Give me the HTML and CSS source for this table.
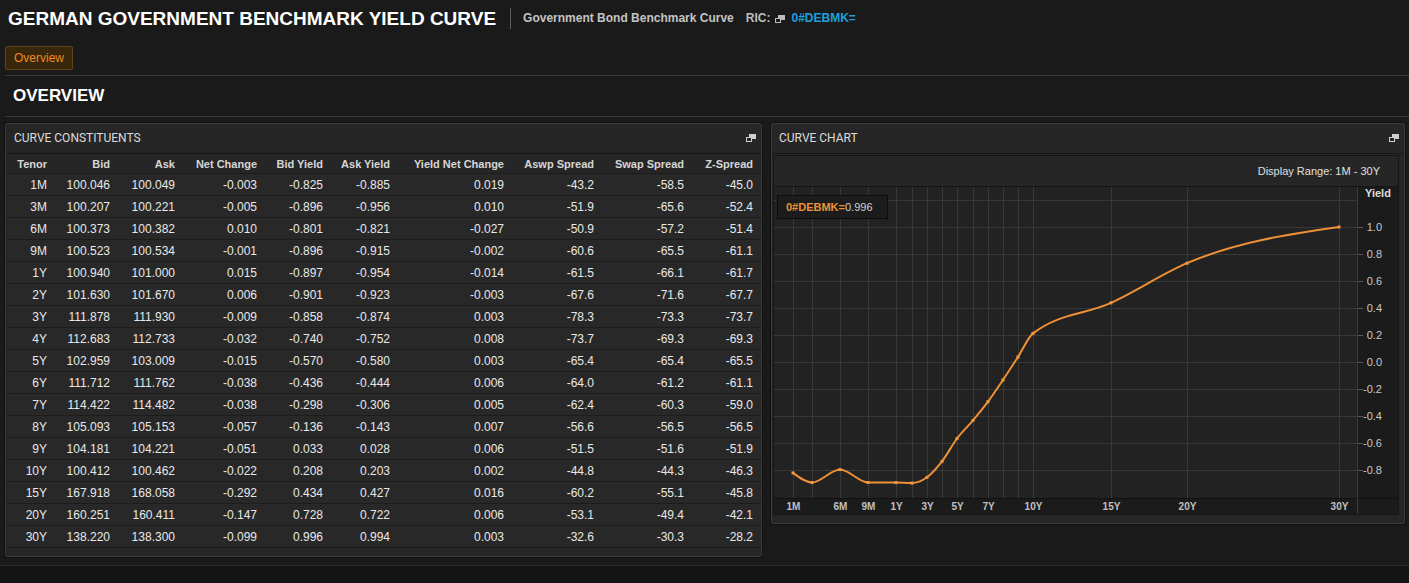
FILE: index.html
```html
<!DOCTYPE html>
<html lang="en">
<head>
<meta charset="utf-8">
<title>German Government Benchmark Yield Curve</title>
<link rel="stylesheet" href="styles.css">
</head>
<body>
<header class="topbar">
  <h1 class="title">GERMAN GOVERNMENT BENCHMARK YIELD CURVE</h1>
  <span class="divider"></span>
  <span class="subtitle">Government Bond Benchmark Curve</span>
  <span class="ric-label">RIC:</span>
  <svg class="ric-icon" viewBox="0 0 10 8"><rect x="3.5" y="0.5" width="6" height="4" fill="#bdbdbd" stroke="#bdbdbd"/><rect x="0.5" y="3.5" width="5" height="4" fill="#1a1a1a" stroke="#bdbdbd"/></svg>
  <span class="ric">0#DEBMK=</span>
</header>
<nav class="tabs"><button class="tab">Overview</button></nav>
<h2 class="section-title">OVERVIEW</h2>
<main class="panels">
  <section class="panel constituents">
    <div class="panel-head"><span>CURVE CONSTITUENTS</span><svg class="restore" viewBox="0 0 10 8"><rect x="3.5" y="0.5" width="6" height="4" fill="#cfcfcf" stroke="#cfcfcf"/><rect x="0.5" y="3.5" width="5" height="4" fill="#262626" stroke="#cfcfcf"/></svg></div>
    <table class="grid">
      <colgroup><col class="c1"><col class="c2"><col class="c3"><col class="c4"><col class="c5"><col class="c6"><col class="c7"><col class="c8"><col class="c9"><col class="c10"></colgroup>
      <thead><tr><th>Tenor</th><th>Bid</th><th>Ask</th><th>Net Change</th><th>Bid Yield</th><th>Ask Yield</th><th>Yield Net Change</th><th>Aswp Spread</th><th>Swap Spread</th><th>Z-Spread</th></tr></thead>
      <tbody>
        <tr><td>1M</td><td>100.046</td><td>100.049</td><td>-0.003</td><td>-0.825</td><td>-0.885</td><td>0.019</td><td>-43.2</td><td>-58.5</td><td>-45.0</td></tr>
        <tr><td>3M</td><td>100.207</td><td>100.221</td><td>-0.005</td><td>-0.896</td><td>-0.956</td><td>0.010</td><td>-51.9</td><td>-65.6</td><td>-52.4</td></tr>
        <tr><td>6M</td><td>100.373</td><td>100.382</td><td>0.010</td><td>-0.801</td><td>-0.821</td><td>-0.027</td><td>-50.9</td><td>-57.2</td><td>-51.4</td></tr>
        <tr><td>9M</td><td>100.523</td><td>100.534</td><td>-0.001</td><td>-0.896</td><td>-0.915</td><td>-0.002</td><td>-60.6</td><td>-65.5</td><td>-61.1</td></tr>
        <tr><td>1Y</td><td>100.940</td><td>101.000</td><td>0.015</td><td>-0.897</td><td>-0.954</td><td>-0.014</td><td>-61.5</td><td>-66.1</td><td>-61.7</td></tr>
        <tr><td>2Y</td><td>101.630</td><td>101.670</td><td>0.006</td><td>-0.901</td><td>-0.923</td><td>-0.003</td><td>-67.6</td><td>-71.6</td><td>-67.7</td></tr>
        <tr><td>3Y</td><td>111.878</td><td>111.930</td><td>-0.009</td><td>-0.858</td><td>-0.874</td><td>0.003</td><td>-78.3</td><td>-73.3</td><td>-73.7</td></tr>
        <tr><td>4Y</td><td>112.683</td><td>112.733</td><td>-0.032</td><td>-0.740</td><td>-0.752</td><td>0.008</td><td>-73.7</td><td>-69.3</td><td>-69.3</td></tr>
        <tr><td>5Y</td><td>102.959</td><td>103.009</td><td>-0.015</td><td>-0.570</td><td>-0.580</td><td>0.003</td><td>-65.4</td><td>-65.4</td><td>-65.5</td></tr>
        <tr><td>6Y</td><td>111.712</td><td>111.762</td><td>-0.038</td><td>-0.436</td><td>-0.444</td><td>0.006</td><td>-64.0</td><td>-61.2</td><td>-61.1</td></tr>
        <tr><td>7Y</td><td>114.422</td><td>114.482</td><td>-0.038</td><td>-0.298</td><td>-0.306</td><td>0.005</td><td>-62.4</td><td>-60.3</td><td>-59.0</td></tr>
        <tr><td>8Y</td><td>105.093</td><td>105.153</td><td>-0.057</td><td>-0.136</td><td>-0.143</td><td>0.007</td><td>-56.6</td><td>-56.5</td><td>-56.5</td></tr>
        <tr><td>9Y</td><td>104.181</td><td>104.221</td><td>-0.051</td><td>0.033</td><td>0.028</td><td>0.006</td><td>-51.5</td><td>-51.6</td><td>-51.9</td></tr>
        <tr><td>10Y</td><td>100.412</td><td>100.462</td><td>-0.022</td><td>0.208</td><td>0.203</td><td>0.002</td><td>-44.8</td><td>-44.3</td><td>-46.3</td></tr>
        <tr><td>15Y</td><td>167.918</td><td>168.058</td><td>-0.292</td><td>0.434</td><td>0.427</td><td>0.016</td><td>-60.2</td><td>-55.1</td><td>-45.8</td></tr>
        <tr><td>20Y</td><td>160.251</td><td>160.411</td><td>-0.147</td><td>0.728</td><td>0.722</td><td>0.006</td><td>-53.1</td><td>-49.4</td><td>-42.1</td></tr>
        <tr><td>30Y</td><td>138.220</td><td>138.300</td><td>-0.099</td><td>0.996</td><td>0.994</td><td>0.003</td><td>-32.6</td><td>-30.3</td><td>-28.2</td></tr>
      </tbody>
    </table>
  </section>
  <section class="panel chart-panel">
    <div class="panel-head"><span>CURVE CHART</span><svg class="restore" viewBox="0 0 10 8"><rect x="3.5" y="0.5" width="6" height="4" fill="#cfcfcf" stroke="#cfcfcf"/><rect x="0.5" y="3.5" width="5" height="4" fill="#262626" stroke="#cfcfcf"/></svg></div>
    <div class="chart-box">
      <div class="chart-bar">Display Range: 1M - 30Y</div>
      <div class="plot">
        <svg class="plot-svg" width="624" height="327" viewBox="774 187 624 327">
          <rect x="774" y="187" width="583" height="311" fill="#222222"/>
          <rect x="1357" y="187" width="41" height="327" fill="#1b1b1b"/>
          <rect x="774" y="498" width="583" height="16" fill="#1b1b1b"/>
          <path d="M774 200.5H1357M774 227.5H1357M774 254.5H1357M774 281.5H1357M774 308.5H1357M774 335.5H1357M774 362.5H1357M774 389.5H1357M774 416.5H1357M774 443.5H1357M774 470.5H1357" stroke="#383838" stroke-width="1" fill="none"/>
          <path d="M793.5 187V498M812.5 187V498M840.5 187V498M868.5 187V498M896.5 187V498M912.5 187V498M927.5 187V498M942.5 187V498M957.5 187V498M973.5 187V498M988.5 187V498M1003.5 187V498M1018.5 187V498M1033.5 187V498M1111.5 187V498M1187.5 187V498M1339.5 187V498" stroke="#383838" stroke-width="1" fill="none"/>
          <path d="M774 498.5H1398" stroke="#111111" stroke-width="1"/>
          <path d="M1357.5 187V514" stroke="#3c3c3c" stroke-width="1"/>
          <path d="M1358 227.5H1363M1358 254.5H1363M1358 281.5H1363M1358 308.5H1363M1358 335.5H1363M1358 362.5H1363M1358 389.5H1363M1358 416.5H1363M1358 443.5H1363M1358 470.5H1363" stroke="#5a5a5a" stroke-width="1"/>
          <g class="ylabels">
            <text class="ytitle" x="1365" y="197">Yield</text>
            <text x="1382" y="231">1.0</text>
            <text x="1382" y="258">0.8</text>
            <text x="1382" y="285">0.6</text>
            <text x="1382" y="312">0.4</text>
            <text x="1382" y="339">0.2</text>
            <text x="1382" y="366">0.0</text>
            <text x="1382" y="393">-0.2</text>
            <text x="1382" y="420">-0.4</text>
            <text x="1382" y="447">-0.6</text>
            <text x="1382" y="474">-0.8</text>
          </g>
          <g class="xlabels">
            <text x="793.5" y="510">1M</text>
            <text x="840.5" y="510">6M</text>
            <text x="868.5" y="510">9M</text>
            <text x="896.5" y="510">1Y</text>
            <text x="927.5" y="510">3Y</text>
            <text x="957.5" y="510">5Y</text>
            <text x="988.5" y="510">7Y</text>
            <text x="1033.5" y="510">10Y</text>
            <text x="1111.5" y="510">15Y</text>
            <text x="1187.5" y="510">20Y</text>
            <text x="1339.5" y="510">30Y</text>
          </g>
          <path class="curve" d="M793,472.9 C799.33,477.7 805.67,482.5 812,482.5 C821.33,482.5 830.67,469.6 840,469.6 C849.33,469.6 858.67,482.43 868,482.5 C877.33,482.57 886.67,482.53 896,482.6 C901.33,482.64 906.67,483.1 912,483.1 C917,483.1 922,480.92 927,477.3 C932,473.68 937,467.87 942,461.4 C947,454.94 952,445.18 957,438.5 C962.33,431.38 967.67,426.75 973,420.4 C978,414.45 983,408.45 988,401.7 C993,394.95 998,387.35 1003,379.9 C1008,372.45 1013,364.75 1018,357 C1023,349.25 1028,337.31 1033,333.4 C1059,313.07 1085,314.78 1111,302.9 C1136.33,291.32 1161.67,274.02 1187,263.2 C1237.67,241.57 1288.33,234.27 1339,227"/>
          <g class="markers">
            <rect x="791.5" y="471.4" width="3" height="3"/>
            <rect x="810.5" y="481" width="3" height="3"/>
            <rect x="838.5" y="468.1" width="3" height="3"/>
            <rect x="866.5" y="481" width="3" height="3"/>
            <rect x="894.5" y="481.1" width="3" height="3"/>
            <rect x="910.5" y="481.6" width="3" height="3"/>
            <rect x="925.5" y="475.8" width="3" height="3"/>
            <rect x="940.5" y="459.9" width="3" height="3"/>
            <rect x="955.5" y="437" width="3" height="3"/>
            <rect x="971.5" y="418.9" width="3" height="3"/>
            <rect x="986.5" y="400.2" width="3" height="3"/>
            <rect x="1001.5" y="378.4" width="3" height="3"/>
            <rect x="1016.5" y="355.5" width="3" height="3"/>
            <rect x="1031.5" y="331.9" width="3" height="3"/>
            <rect x="1109.5" y="301.4" width="3" height="3"/>
            <rect x="1185.5" y="261.7" width="3" height="3"/>
            <rect x="1337.5" y="225.5" width="3" height="3"/>
          </g>
        </svg>
        <div class="legend"><span class="legend-name">0#DEBMK=</span><span class="legend-val">0.996</span></div>
      </div>
    </div>
  </section>
</main>
<footer class="footer"></footer>
</body>
</html>
```

FILE: styles.css
```css
* { box-sizing: border-box; }
html, body { margin: 0; padding: 0; }
body {
  background: #1a1a1a;
  color: #e6e6e6;
  font-family: "Liberation Sans", Arial, sans-serif;
  width: 1409px;
  height: 583px;
  overflow: hidden;
}

/* top bar */
.topbar {
  display: flex;
  align-items: center;
  height: 36px;
  padding-left: 8px;
}
.title {
  margin: 0;
  font-size: 19px;
  font-weight: bold;
  color: #ffffff;
  line-height: 1;
}
.divider {
  width: 1px;
  height: 21px;
  background: #5c5c5c;
  margin: 0 12px 0 14px;
}
.subtitle {
  font-size: 12px;
  font-weight: bold;
  color: #c4c4c4;
}
.ric-label {
  font-size: 12px;
  font-weight: bold;
  color: #bcbcbc;
  margin-left: 12px;
}
.ric-icon {
  width: 10px;
  height: 8px;
  margin: 2px 6px 0 5px;
}
.ric {
  font-size: 12px;
  font-weight: bold;
  color: #1e9fdb;
}

/* tabs */
.tabs {
  display: flex;
  margin-left: 5px;
  padding: 10px 0 5px;
  border-bottom: 1px solid #383838;
}
.tab {
  height: 24px;
  padding: 0 8px;
  border: 1px solid #5e4418;
  border-radius: 2px;
  background: #38270b;
  color: #ee8a22;
  font-family: "Liberation Sans", Arial, sans-serif;
  font-size: 12px;
  line-height: 22px;
}

.section-title {
  margin: 0 0 0 5px;
  padding-left: 8px;
  height: 41px;
  line-height: 40px;
  font-size: 17px;
  font-weight: bold;
  color: #ffffff;
  border-bottom: 1px solid #383838;
}

/* panels */
.panels {
  display: flex;
  align-items: flex-start;
  gap: 9px;
  margin-top: 6px;
  padding-left: 5px;
}
.panel {
  background: #262626;
  border: 1px solid #3a3a3a;
  border-radius: 2px;
  box-shadow: 0 0 0 1px #111111;
}
.constituents { width: 757px; padding-bottom: 8px; }
.chart-panel { width: 634px; padding-bottom: 8px; }

.panel-head {
  height: 30px;
  display: flex;
  align-items: center;
  justify-content: space-between;
  padding: 0 5px 1px 8px;
  border-bottom: 1px solid #181818;
  font-family: Roboto, "Liberation Sans", Arial, sans-serif;
  font-size: 12px;
  color: #dcdcdc;
}
.chart-panel .panel-head { padding-left: 7px; }
.restore { width: 10px; height: 8px; }

/* table */
.grid {
  width: 100%;
  border-collapse: separate;
  border-spacing: 0;
  table-layout: fixed;
}
.c1 { width: 49px; }
.c2 { width: 63px; }
.c3 { width: 65px; }
.c4 { width: 82px; }
.c5 { width: 66px; }
.c6 { width: 67px; }
.c7 { width: 114px; }
.c8 { width: 90px; }
.c9 { width: 90px; }
.c10 { width: 69px; }
.grid th, .grid td {
  padding: 1px 8px 0 0;
  text-align: right;
  white-space: nowrap;
  border-bottom: 1px solid #1c1c1c;
}
.grid th {
  font-size: 11px;
  font-weight: bold;
  color: #d6d6d6;
  line-height: 18px;
}
.grid td {
  font-size: 12px;
  color: #e8e8e8;
  line-height: 20px;
  background: #282828;
}

/* chart */
.chart-box {
  margin: 1px 5px 0 1px;
  border: 1px solid #161616;
  background: #222222;
}
.chart-bar {
  height: 31px;
  display: flex;
  align-items: center;
  justify-content: flex-end;
  padding-right: 18px;
  border-bottom: 1px solid #141414;
  background: #262626;
  font-size: 11px;
  color: #e0e0e0;
}
.plot {
  position: relative;
  height: 327px;
}
.plot-svg { display: block; }
.ylabels text {
  font-family: "Liberation Sans", Arial, sans-serif;
  font-size: 11px;
  fill: #c8c8c8;
  text-anchor: end;
}
.ylabels .ytitle {
  font-weight: bold;
  fill: #dddddd;
  text-anchor: start;
}
.xlabels text {
  font-family: "Liberation Sans", Arial, sans-serif;
  font-size: 10px;
  font-weight: bold;
  fill: #c0c0c0;
  text-anchor: middle;
}
.curve {
  fill: none;
  stroke: #ee9036;
  stroke-width: 2;
  stroke-linejoin: round;
}
.markers rect { fill: #f29a40; }

.legend {
  position: absolute;
  left: 3px;
  top: 8px;
  width: 111px;
  height: 24px;
  display: flex;
  align-items: center;
  padding-left: 8px;
  background: #1c1c1c;
  border: 1px solid #0c0c0c;
  font-size: 11px;
}
.legend-name { color: #eb9236; font-weight: bold; }
.legend-val { color: #d0d0d0; }

.footer {
  margin-top: 8px;
  height: 18px;
  border-top: 1px solid #2a2a2a;
  background: #141414;
}
```
